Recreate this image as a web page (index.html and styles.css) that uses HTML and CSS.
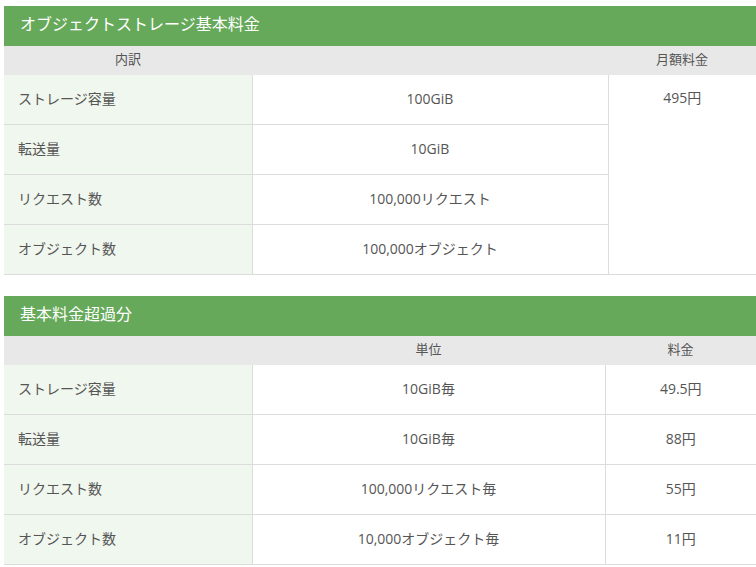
FILE: index.html
```html
<!DOCTYPE html>
<html lang="ja">
<head>
<meta charset="utf-8">
<link rel="stylesheet" href="styles.css">
</head>
<body>
<div class="page">
  <section class="price-block">
    <h2 class="block-title">オブジェクトストレージ基本料金</h2>
    <table class="price-table">
      <colgroup>
        <col class="c1"><col class="c2a"><col class="c3a">
      </colgroup>
      <thead>
        <tr><th>内訳</th><th></th><th>月額料金</th></tr>
      </thead>
      <tbody>
        <tr><td class="label">ストレージ容量</td><td class="val">100GiB</td><td class="val top" rowspan="4">495円</td></tr>
        <tr><td class="label">転送量</td><td class="val">10GiB</td></tr>
        <tr><td class="label">リクエスト数</td><td class="val">100,000リクエスト</td></tr>
        <tr><td class="label">オブジェクト数</td><td class="val">100,000オブジェクト</td></tr>
      </tbody>
    </table>
  </section>
  <section class="price-block">
    <h2 class="block-title">基本料金超過分</h2>
    <table class="price-table">
      <colgroup>
        <col class="c1"><col class="c2b"><col class="c3b">
      </colgroup>
      <thead>
        <tr><th></th><th>単位</th><th>料金</th></tr>
      </thead>
      <tbody>
        <tr><td class="label">ストレージ容量</td><td class="val">10GiB毎</td><td class="val">49.5円</td></tr>
        <tr><td class="label">転送量</td><td class="val">10GiB毎</td><td class="val">88円</td></tr>
        <tr><td class="label">リクエスト数</td><td class="val">100,000リクエスト毎</td><td class="val">55円</td></tr>
        <tr><td class="label">オブジェクト数</td><td class="val">10,000オブジェクト毎</td><td class="val">11円</td></tr>
      </tbody>
    </table>
  </section>
</div>
</body>
</html>
```
FILE: styles.css
```css
html, body {
  margin: 0;
  padding: 0;
  background: #fff;
}
body {
  font-family: "Open Sans", "Noto Sans CJK JP", sans-serif;
  color: #555;
}
.page {
  padding: 6px 0 0 4px;
  width: 752px;
}
.price-block {
  margin-bottom: 21px;
}
.block-title {
  margin: 0;
  height: 36px;
  line-height: 36px;
  padding-bottom: 4px;
  background: #66a95a;
  color: #fff;
  font-size: 16px;
  font-weight: normal;
  padding-left: 16px;
}
.price-table {
  width: 752px;
  border-collapse: collapse;
  table-layout: fixed;
}
.c1 { width: 248px; }
.c2a { width: 356px; }
.c3a { width: 148px; }
.c2b { width: 353px; }
.c3b { width: 151px; }
.price-table th {
  background: #e8e8e8;
  height: 27px;
  padding: 0 0 2px 0;
  font-size: 13px;
  font-weight: normal;
  color: #555;
  text-align: center;
  line-height: 27px;
}
.price-table td {
  height: 47px;
  padding: 0 0 2px 0;
  font-size: 14px;
  line-height: 20px;
  border-bottom: 1px solid #dcdcdc;
  border-left: 1px solid #dcdcdc;
}
.price-table td.label {
  background: #f0f7ee;
  padding-left: 14px;
  border-left: none;
}
.price-table td.val {
  text-align: center;
}
.price-table td.top {
  vertical-align: top;
  padding-top: 13px;
}
```
